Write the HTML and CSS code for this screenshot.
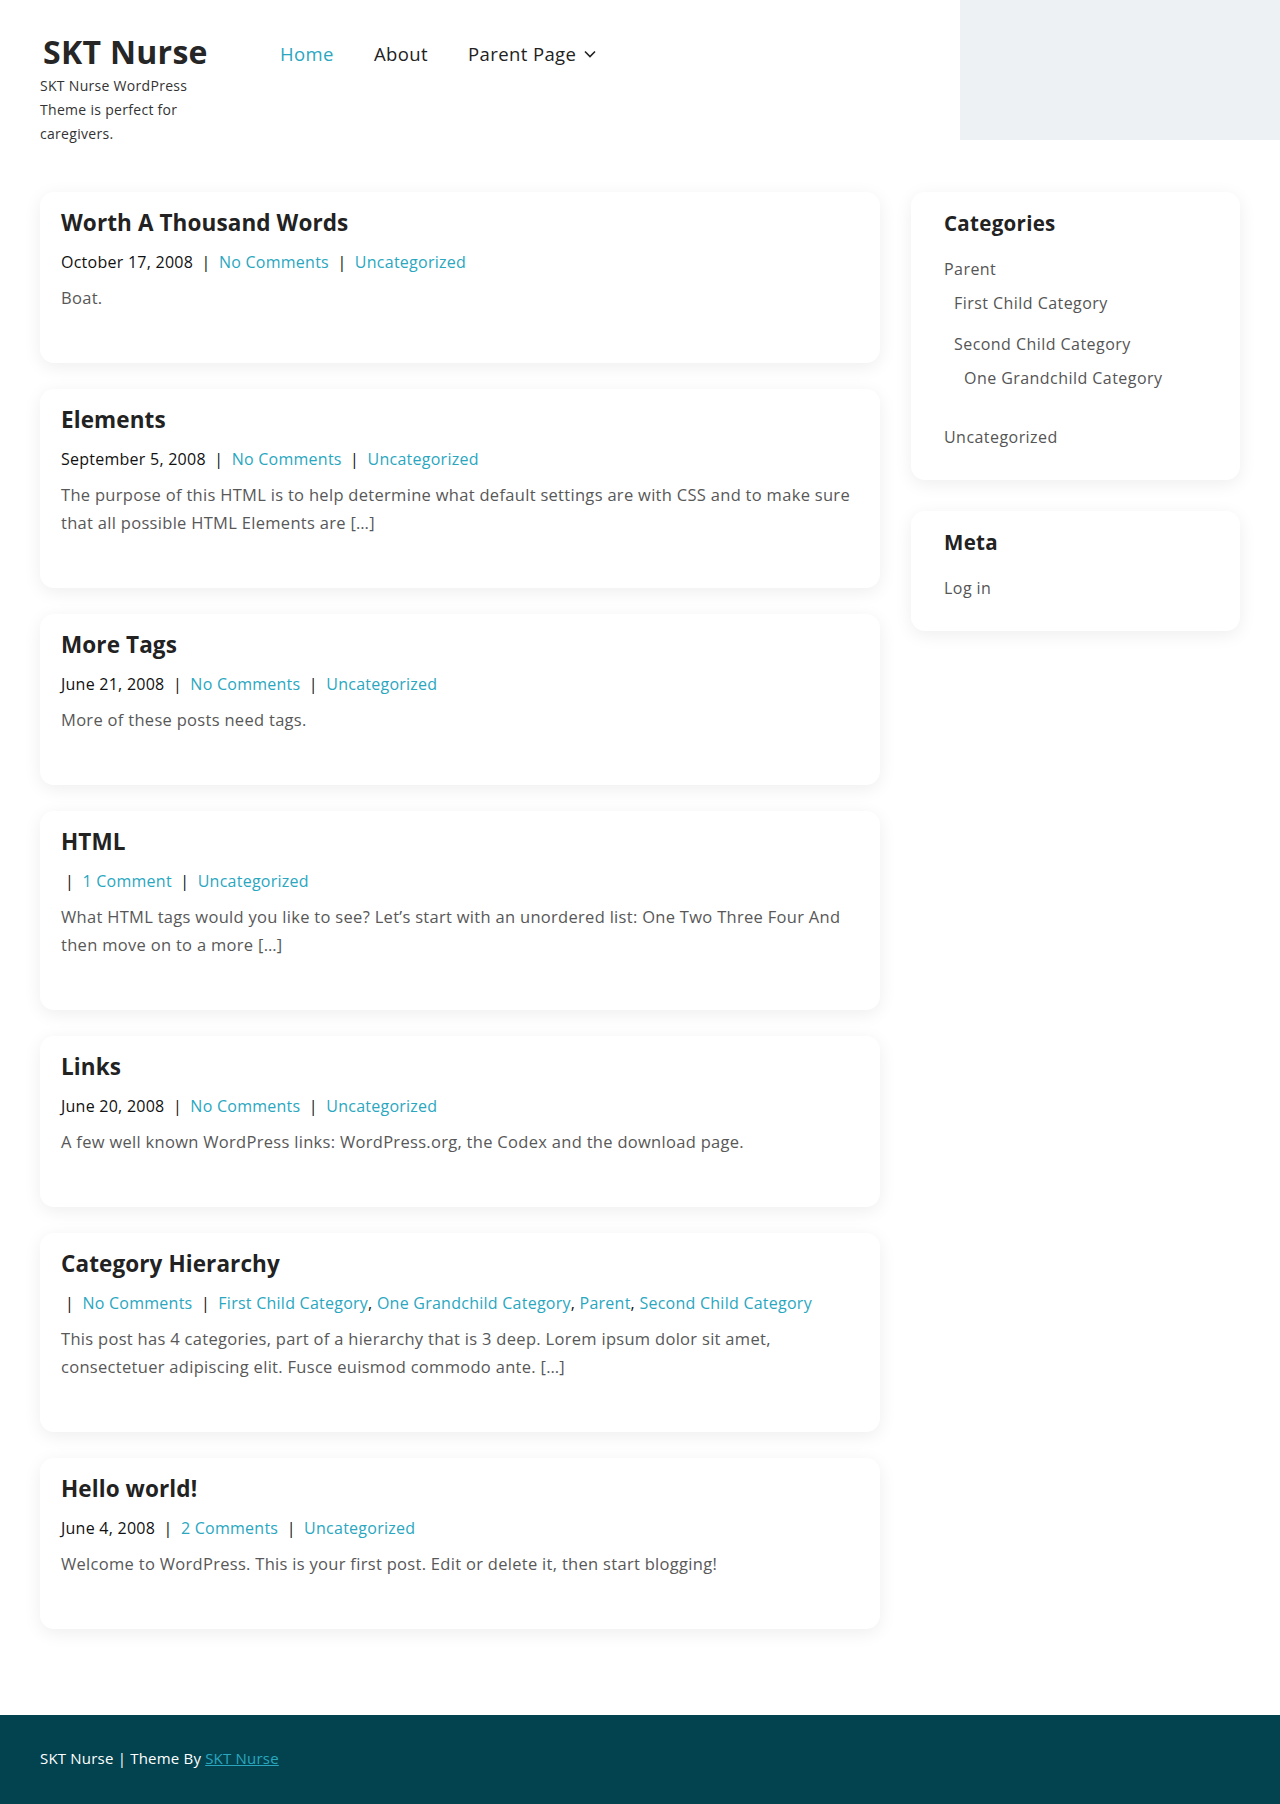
FILE: index.html
```html
<!DOCTYPE html>
<html lang="en">
<head>
<meta charset="utf-8">
<title>SKT Nurse</title>
<link rel="stylesheet" href="styles.css">
</head>
<body>
<header class="site-header">
  <div class="branding">
    <div class="site-title">SKT Nurse</div>
    <p class="tagline">SKT Nurse WordPress Theme is perfect for caregivers.</p>
  </div>
  <nav class="main-nav">
    <a class="nav-link active" href="#">Home</a>
    <a class="nav-link" href="#">About</a>
    <a class="nav-link" href="#">Parent Page <svg class="chev" width="12" height="8" viewBox="0 0 12 8"><path d="M1 1.5l5 5 5-5" fill="none" stroke="#222" stroke-width="1.6"/></svg></a>
  </nav>
  <div class="header-panel"></div>
</header>

<div class="container">
  <main class="posts">
    <article class="card">
      <h2 class="post-title">Worth A Thousand Words</h2>
      <div class="post-meta">October 17, 2008 <span class="sep">|</span> <a href="#">No Comments</a> <span class="sep">|</span> <a href="#">Uncategorized</a></div>
      <p class="excerpt">Boat.</p>
    </article>
    <article class="card">
      <h2 class="post-title">Elements</h2>
      <div class="post-meta">September 5, 2008 <span class="sep">|</span> <a href="#">No Comments</a> <span class="sep">|</span> <a href="#">Uncategorized</a></div>
      <p class="excerpt">The purpose of this HTML is to help determine what default settings are with CSS and to make sure that all possible HTML Elements are […]</p>
    </article>
    <article class="card">
      <h2 class="post-title">More Tags</h2>
      <div class="post-meta">June 21, 2008 <span class="sep">|</span> <a href="#">No Comments</a> <span class="sep">|</span> <a href="#">Uncategorized</a></div>
      <p class="excerpt">More of these posts need tags.</p>
    </article>
    <article class="card">
      <h2 class="post-title">HTML</h2>
      <div class="post-meta"> <span class="sep">|</span> <a href="#">1 Comment</a> <span class="sep">|</span> <a href="#">Uncategorized</a></div>
      <p class="excerpt">What HTML tags would you like to see? Let’s start with an unordered list: One Two Three Four And then move on to a more […]</p>
    </article>
    <article class="card">
      <h2 class="post-title">Links</h2>
      <div class="post-meta">June 20, 2008 <span class="sep">|</span> <a href="#">No Comments</a> <span class="sep">|</span> <a href="#">Uncategorized</a></div>
      <p class="excerpt">A few well known WordPress links: WordPress.org, the Codex and the download page.</p>
    </article>
    <article class="card">
      <h2 class="post-title">Category Hierarchy</h2>
      <div class="post-meta"> <span class="sep">|</span> <a href="#">No Comments</a> <span class="sep">|</span> <a href="#">First Child Category</a>, <a href="#">One Grandchild Category</a>, <a href="#">Parent</a>, <a href="#">Second Child Category</a></div>
      <p class="excerpt">This post has 4 categories, part of a hierarchy that is 3 deep. Lorem ipsum dolor sit amet, consectetuer adipiscing elit. Fusce euismod commodo ante. […]</p>
    </article>
    <article class="card">
      <h2 class="post-title">Hello world!</h2>
      <div class="post-meta">June 4, 2008 <span class="sep">|</span> <a href="#">2 Comments</a> <span class="sep">|</span> <a href="#">Uncategorized</a></div>
      <p class="excerpt">Welcome to WordPress. This is your first post. Edit or delete it, then start blogging!</p>
    </article>
  </main>

  <aside class="sidebar">
    <section class="widget">
      <h3 class="widget-title">Categories</h3>
      <ul class="cat-list">
        <li>Parent
          <ul class="children">
            <li>First Child Category</li>
            <li>Second Child Category
              <ul class="children">
                <li>One Grandchild Category</li>
              </ul>
            </li>
          </ul>
        </li>
        <li>Uncategorized</li>
      </ul>
    </section>
    <section class="widget">
      <h3 class="widget-title">Meta</h3>
      <ul class="cat-list">
        <li>Log in</li>
      </ul>
    </section>
  </aside>
</div>

<footer class="site-footer">
  <div class="footer-inner">SKT Nurse | Theme By <a href="#">SKT Nurse</a></div>
</footer>
</body>
</html>
```

FILE: styles.css
```css
* { box-sizing: border-box; }
html, body { margin: 0; padding: 0; }
body {
  font-family: "Open Sans", "Liberation Sans", sans-serif;
  color: #222;
  background: #fff;
}
a { text-decoration: none; color: #2aa7bf; }

.site-header {
  display: flex;
  align-items: flex-start;
  height: 140px;
}
.branding {
  padding: 32px 0 0 40px;
  width: 280px;
}
.site-title {
  font-size: 32px;
  font-weight: 700;
  line-height: 40px;
  padding-left: 3px;
  color: #262626;
  letter-spacing: 0.3px;
}
.tagline {
  margin: 2px 0 0;
  width: 175px;
  font-size: 14px;
  line-height: 24px;
  letter-spacing: 0.3px;
  color: #333;
}
.main-nav {
  display: flex;
  align-items: center;
  padding-top: 32px;
  height: 76px;
}
.nav-link {
  font-size: 18.5px;
  line-height: 44px;
  letter-spacing: 0.4px;
  color: #222;
  margin-right: 40px;
  display: flex;
  align-items: center;
}
.nav-link.active { color: #2aa7bf; }
.chev { margin-left: 8px; }
.header-panel {
  margin-left: auto;
  width: 320px;
  height: 140px;
  background: #edf1f4;
}

.container {
  width: 1200px;
  margin: 52px auto 0;
  display: flex;
  align-items: flex-start;
  gap: 31px;
  padding-bottom: 86px;
}
.posts {
  width: 840px;
  display: flex;
  flex-direction: column;
  gap: 26px;
}
.card {
  background: #fff;
  border-radius: 14px;
  box-shadow: 0 4px 18px rgba(0, 0, 0, 0.07);
  padding: 16px 21px 51px;
}
.post-title {
  margin: 0 0 10px;
  font-size: 22.5px;
  line-height: 30px;
  font-weight: 700;
  letter-spacing: 0.1px;
  color: #222;
}
.post-meta {
  font-size: 16px;
  line-height: 28px;
  letter-spacing: 0.25px;
  color: #111;
  margin-bottom: 8px;
}
.sep { margin: 0 4px; }
.excerpt {
  margin: 0;
  font-size: 16.5px;
  line-height: 28px;
  letter-spacing: 0.3px;
  color: #585858;
}

.sidebar {
  width: 329px;
  display: flex;
  flex-direction: column;
  gap: 31px;
}
.widget {
  background: #fff;
  border-radius: 14px;
  box-shadow: 0 4px 18px rgba(0, 0, 0, 0.07);
  padding: 16px 32px 23px 33px;
}
.widget-title {
  margin: 0 0 10px;
  font-size: 20.5px;
  line-height: 30px;
  font-weight: 700;
  letter-spacing: 0.3px;
  color: #222;
}
.cat-list {
  list-style: none;
  margin: 0;
  padding: 0;
  font-size: 16px;
  letter-spacing: 0.45px;
  color: #555;
}
.cat-list li {
  line-height: 26px;
  padding: 8px 0 7px;
}
.cat-list .children {
  list-style: none;
  margin: 0 0 2px;
  padding: 0 0 0 10px;
}

.site-footer {
  background: #02434f;
  height: 90px;
}
.footer-inner {
  padding: 31px 40px 0;
  font-size: 15px;
  line-height: 24px;
  letter-spacing: 0.2px;
  color: #fff;
}
.footer-inner a {
  color: #2aa7bf;
  text-decoration: underline;
}
```
